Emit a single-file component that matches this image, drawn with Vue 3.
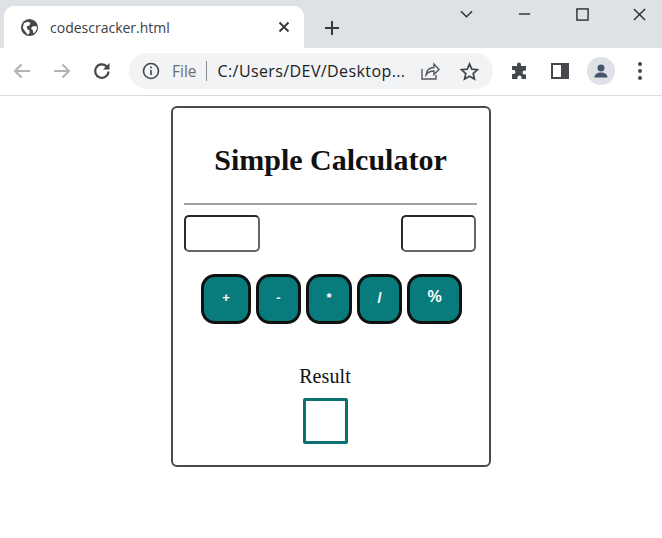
<template>
  <div class="page">
    <header class="tabstrip">
      <div class="tab">
        <svg class="favicon" viewBox="0 0 20 20">
          <circle cx="10" cy="10" r="9" fill="#44474b" />
          <path d="M4 5.500 8 4l3 1-1 3-3 1 1 3 2 1v3l-2 1.500-3-4-2-3zM13 9l4-.5 1 2-2 4.500-2 1-.5-3-2-2z" fill="#fff" />
        </svg>
        <span class="tab-title">codescracker.html</span>
        <svg class="tab-close" viewBox="0 0 12 12">
          <path d="M1.500 1.500l9 9M10.500 1.500l-9 9" />
        </svg>
      </div>
      <svg class="new-tab" viewBox="0 0 16 16">
        <path d="M8 1v14M1 8h14" />
      </svg>
      <div class="win-controls">
        <svg class="win-icon chevron" viewBox="0 0 14 8"><path d="M1 1l6 6 6-6" /></svg>
        <svg class="win-icon minimize" viewBox="0 0 14 2"><path d="M1 1h12" /></svg>
        <svg class="win-icon maximize" viewBox="0 0 14 14"><rect x="1" y="1" width="12" height="12" /></svg>
        <svg class="win-icon closex" viewBox="0 0 14 14"><path d="M1 1l12 12M13 1L1 13" /></svg>
      </div>
    </header>

    <nav class="toolbar">
      <svg class="nav-icon" viewBox="0 0 20 20"><path class="dim" d="M18 10H3M9.500 3.500 3 10l6.500 6.500" /></svg>
      <svg class="nav-icon" viewBox="0 0 20 20"><path class="dim" d="M2 10h15M10.500 3.500 17 10l-6.500 6.500" /></svg>
      <svg class="nav-icon" viewBox="0 0 20 20">
        <path class="dark" d="M16.500 10.500a6.700 6.700 0 1 1-1.800-5" />
        <path d="M17.500 2v6.500H11z" fill="#44474b" />
      </svg>
      <div class="omnibox">
        <svg class="info" viewBox="0 0 18 18">
          <circle cx="9" cy="9" r="7.500" />
          <path d="M9 8v5M9 4.500v2" />
        </svg>
        <span class="scheme">File</span>
        <span class="divider"></span>
        <span class="url">C:/Users/DEV/Desktop...</span>
        <svg class="share" viewBox="0 0 20 20">
          <path d="M2 8v10h14v-4M6 14c0-5 4-7.500 8-7.500V3l5 5.500-5 5V10c-3 0-6 1-8 4z" />
        </svg>
        <svg class="star" viewBox="0 0 20 20">
          <path d="M10 2l2.400 5.500 6 .6-4.500 4 1.300 5.900L10 15l-5.200 3 1.300-5.900-4.500-4 6-.6z" />
        </svg>
      </div>
      <svg class="ext" viewBox="0 0 20 20">
        <path d="M7 3.500a2 2 0 0 1 4 0V5h5v4.500h-1.500a2 2 0 0 0 0 4H16V18h-4.500v-1.500a2 2 0 0 0-4 0V18H2v-5h1.500a2 2 0 0 0 0-4H2V5h5z" fill="#44474b" />
      </svg>
      <svg class="side" viewBox="0 0 18 18">
        <rect x="1" y="2" width="16" height="14" fill="none" stroke="#44474b" stroke-width="2" />
        <rect x="10" y="2" width="7" height="14" fill="#44474b" />
      </svg>
      <div class="avatar">
        <svg viewBox="0 0 20 20">
          <circle cx="10" cy="7" r="3.500" fill="#44546a" />
          <path d="M3.500 16.500c0-3.500 3-5 6.500-5s6.500 1.500 6.500 5z" fill="#44546a" />
        </svg>
      </div>
      <div class="dots"><i></i><i></i><i></i></div>
    </nav>

    <main class="content">
      <section class="calc">
        <h1>Simple Calculator</h1>
        <hr />
        <div class="inputs">
          <input v-model="first" type="text" class="num first" />
          <input v-model="second" type="text" class="num second" />
        </div>
        <div class="ops">
          <button v-for="op in ops" :key="op.sign" :class="['op', op.cls]">{{ op.sign }}</button>
        </div>
        <div class="result-area">
          <p class="result-label">Result</p>
          <div class="result"></div>
        </div>
      </section>
    </main>
  </div>
</template>

<script setup>
import { ref } from 'vue'

const first = ref('')
const second = ref('')

const ops = [
  { sign: '+', cls: 'add' },
  { sign: '-', cls: 'sub' },
  { sign: '*', cls: 'mul' },
  { sign: '/', cls: 'div' },
  { sign: '%', cls: 'mod' }
]
</script>

<style>
html, body { margin: 0; background: #fff; }
</style>

<style scoped>
* { box-sizing: border-box; }

.page {
  width: 662px;
  height: 538px;
  overflow: hidden;
  font-family: "Liberation Sans", Arial, sans-serif;
  background: #fff;
}

.tabstrip {
  height: 48px;
  background: #dee1e6;
  display: flex;
  align-items: flex-end;
  position: relative;
  padding-left: 4px;
}
.tab {
  width: 300px;
  height: 42px;
  background: #fff;
  border-radius: 10px 10px 0 0;
  display: flex;
  align-items: center;
  padding: 0 14px 0 16px;
}
.favicon { width: 19px; height: 19px; flex: none; }
.tab-title {
  margin-left: 11px;
  font-family: "Open Sans", "Noto Sans", sans-serif;
  font-size: 14px;
  color: #3c4043;
  flex: 1;
}
.tab-close { width: 12px; height: 12px; fill: none; stroke: #3a3c40; stroke-width: 2; }
.new-tab {
  width: 16px;
  height: 16px;
  margin: 0 0 12px 20px;
  fill: none;
  stroke: #35373b;
  stroke-width: 2;
}
.win-controls {
  position: absolute;
  top: 7px;
  right: 0;
  width: 205px;
  height: 14px;
}
.win-icon { position: absolute; fill: none; stroke: #2a2c30; stroke-width: 1.500; }
.chevron { left: 3px; top: 3px; width: 13px; height: 8px; }
.minimize { left: 61px; top: 6px; width: 13px; height: 2px; }
.maximize { left: 119px; top: 1px; width: 13px; height: 13px; }
.closex { left: 176px; top: 1px; width: 13px; height: 13px; }

.toolbar {
  height: 48px;
  border-bottom: 1px solid #d9dbde;
  display: flex;
  align-items: center;
  padding: 0 0 1px 12px;
  position: relative;
}
.nav-icon { width: 20px; height: 20px; margin-right: 20px; flex: none; }
.nav-icon:nth-child(3) { margin-right: 17px; }
.dim { fill: none; stroke: #b0b3b7; stroke-width: 2; }
.dark { fill: none; stroke: #44474b; stroke-width: 2.200; }

.omnibox {
  width: 364px;
  height: 36px;
  background: #f1f3f4;
  border-radius: 18px;
  display: flex;
  align-items: center;
  padding-left: 13px;
  flex: none;
}
.info { width: 18px; height: 18px; fill: none; stroke: #44474b; stroke-width: 1.600; flex: none; }
.scheme { margin-left: 12px; color: #6c6f73; font-family: "Open Sans", sans-serif; font-size: 15.500px; }
.divider { width: 1px; height: 20px; background: #8a8d91; margin: 0 11px 0 9px; flex: none; }
.url {
  font-size: 16px;
  color: #202124;
  font-family: "Open Sans", sans-serif;
  width: 191px;
  white-space: nowrap;
  letter-spacing: 0.400px;
  flex: none;
}
.share { width: 20px; height: 20px; fill: none; stroke: #55585c; stroke-width: 1.400; margin-left: 11px; flex: none; }
.star { width: 19px; height: 19px; fill: none; stroke: #44474b; stroke-width: 1.800; margin-left: 20px; flex: none; }

.ext { width: 20px; height: 20px; margin-left: 17px; flex: none; }
.side { width: 18px; height: 18px; margin-left: 21px; flex: none; }
.avatar {
  width: 28px;
  height: 28px;
  border-radius: 50%;
  background: #dee1e6;
  margin-left: 18px;
  display: flex;
  align-items: center;
  justify-content: center;
  flex: none;
}
.avatar svg { width: 20px; height: 20px; }
.dots {
  margin-left: 23px;
  display: flex;
  flex-direction: column;
  gap: 3px;
}
.dots i { display: block; width: 4px; height: 4px; border-radius: 50%; background: #44474b; }

.content { padding: 10px 0 0 171px; }

.calc {
  width: 320px;
  height: 361px;
  border: 2px solid #4a4a4a;
  border-radius: 6px;
  padding: 0 12px 0 11px;
  font-family: "Liberation Serif", "Times New Roman", serif;
  color: #000;
  text-align: center;
}
h1 {
  margin: 34px 0 0;
  font-size: 30px;
  line-height: 36px;
  font-weight: 700;
  color: #111;
}
hr {
  margin: 25px 0 0;
  border: 0;
  border-top: 2px solid #a0a0a0;
}
.inputs {
  display: flex;
  justify-content: space-between;
  margin-top: 10px;
  padding-right: 1px;
}
.num {
  height: 37px;
  border: 2px solid;
  border-color: #2a2a2a #666 #666 #2a2a2a;
  border-radius: 5px;
  background: #fff;
  outline: none;
  padding: 0;
}
.first { width: 76px; }
.second { width: 75px; }
.ops {
  display: flex;
  justify-content: center;
  gap: 5px;
  margin-top: 22px;
  padding-left: 2px;
}
.op {
  height: 50px;
  background: #087c7c;
  color: #fff;
  border: 3px solid #111;
  border-radius: 14px;
  font-family: "Liberation Sans", Arial, sans-serif;
  font-weight: 700;
  font-size: 13px;
  padding: 0 0 4px;
}
.add { width: 50px; }
.sub { width: 45px; }
.mul { width: 46px; }
.div { width: 45px; font-size: 15px; }
.mod { width: 55px; font-size: 16px; }
.result-area { padding-right: 11px; }
.result-label {
  margin: 40px 0 0;
  font-size: 20px;
  line-height: 24px;
  color: #111;
  letter-spacing: 0.100px;
}
.result {
  width: 45px;
  height: 46px;
  border: 3px solid #0a7070;
  border-radius: 2px;
  margin: 10px auto 0;
}
</style>
